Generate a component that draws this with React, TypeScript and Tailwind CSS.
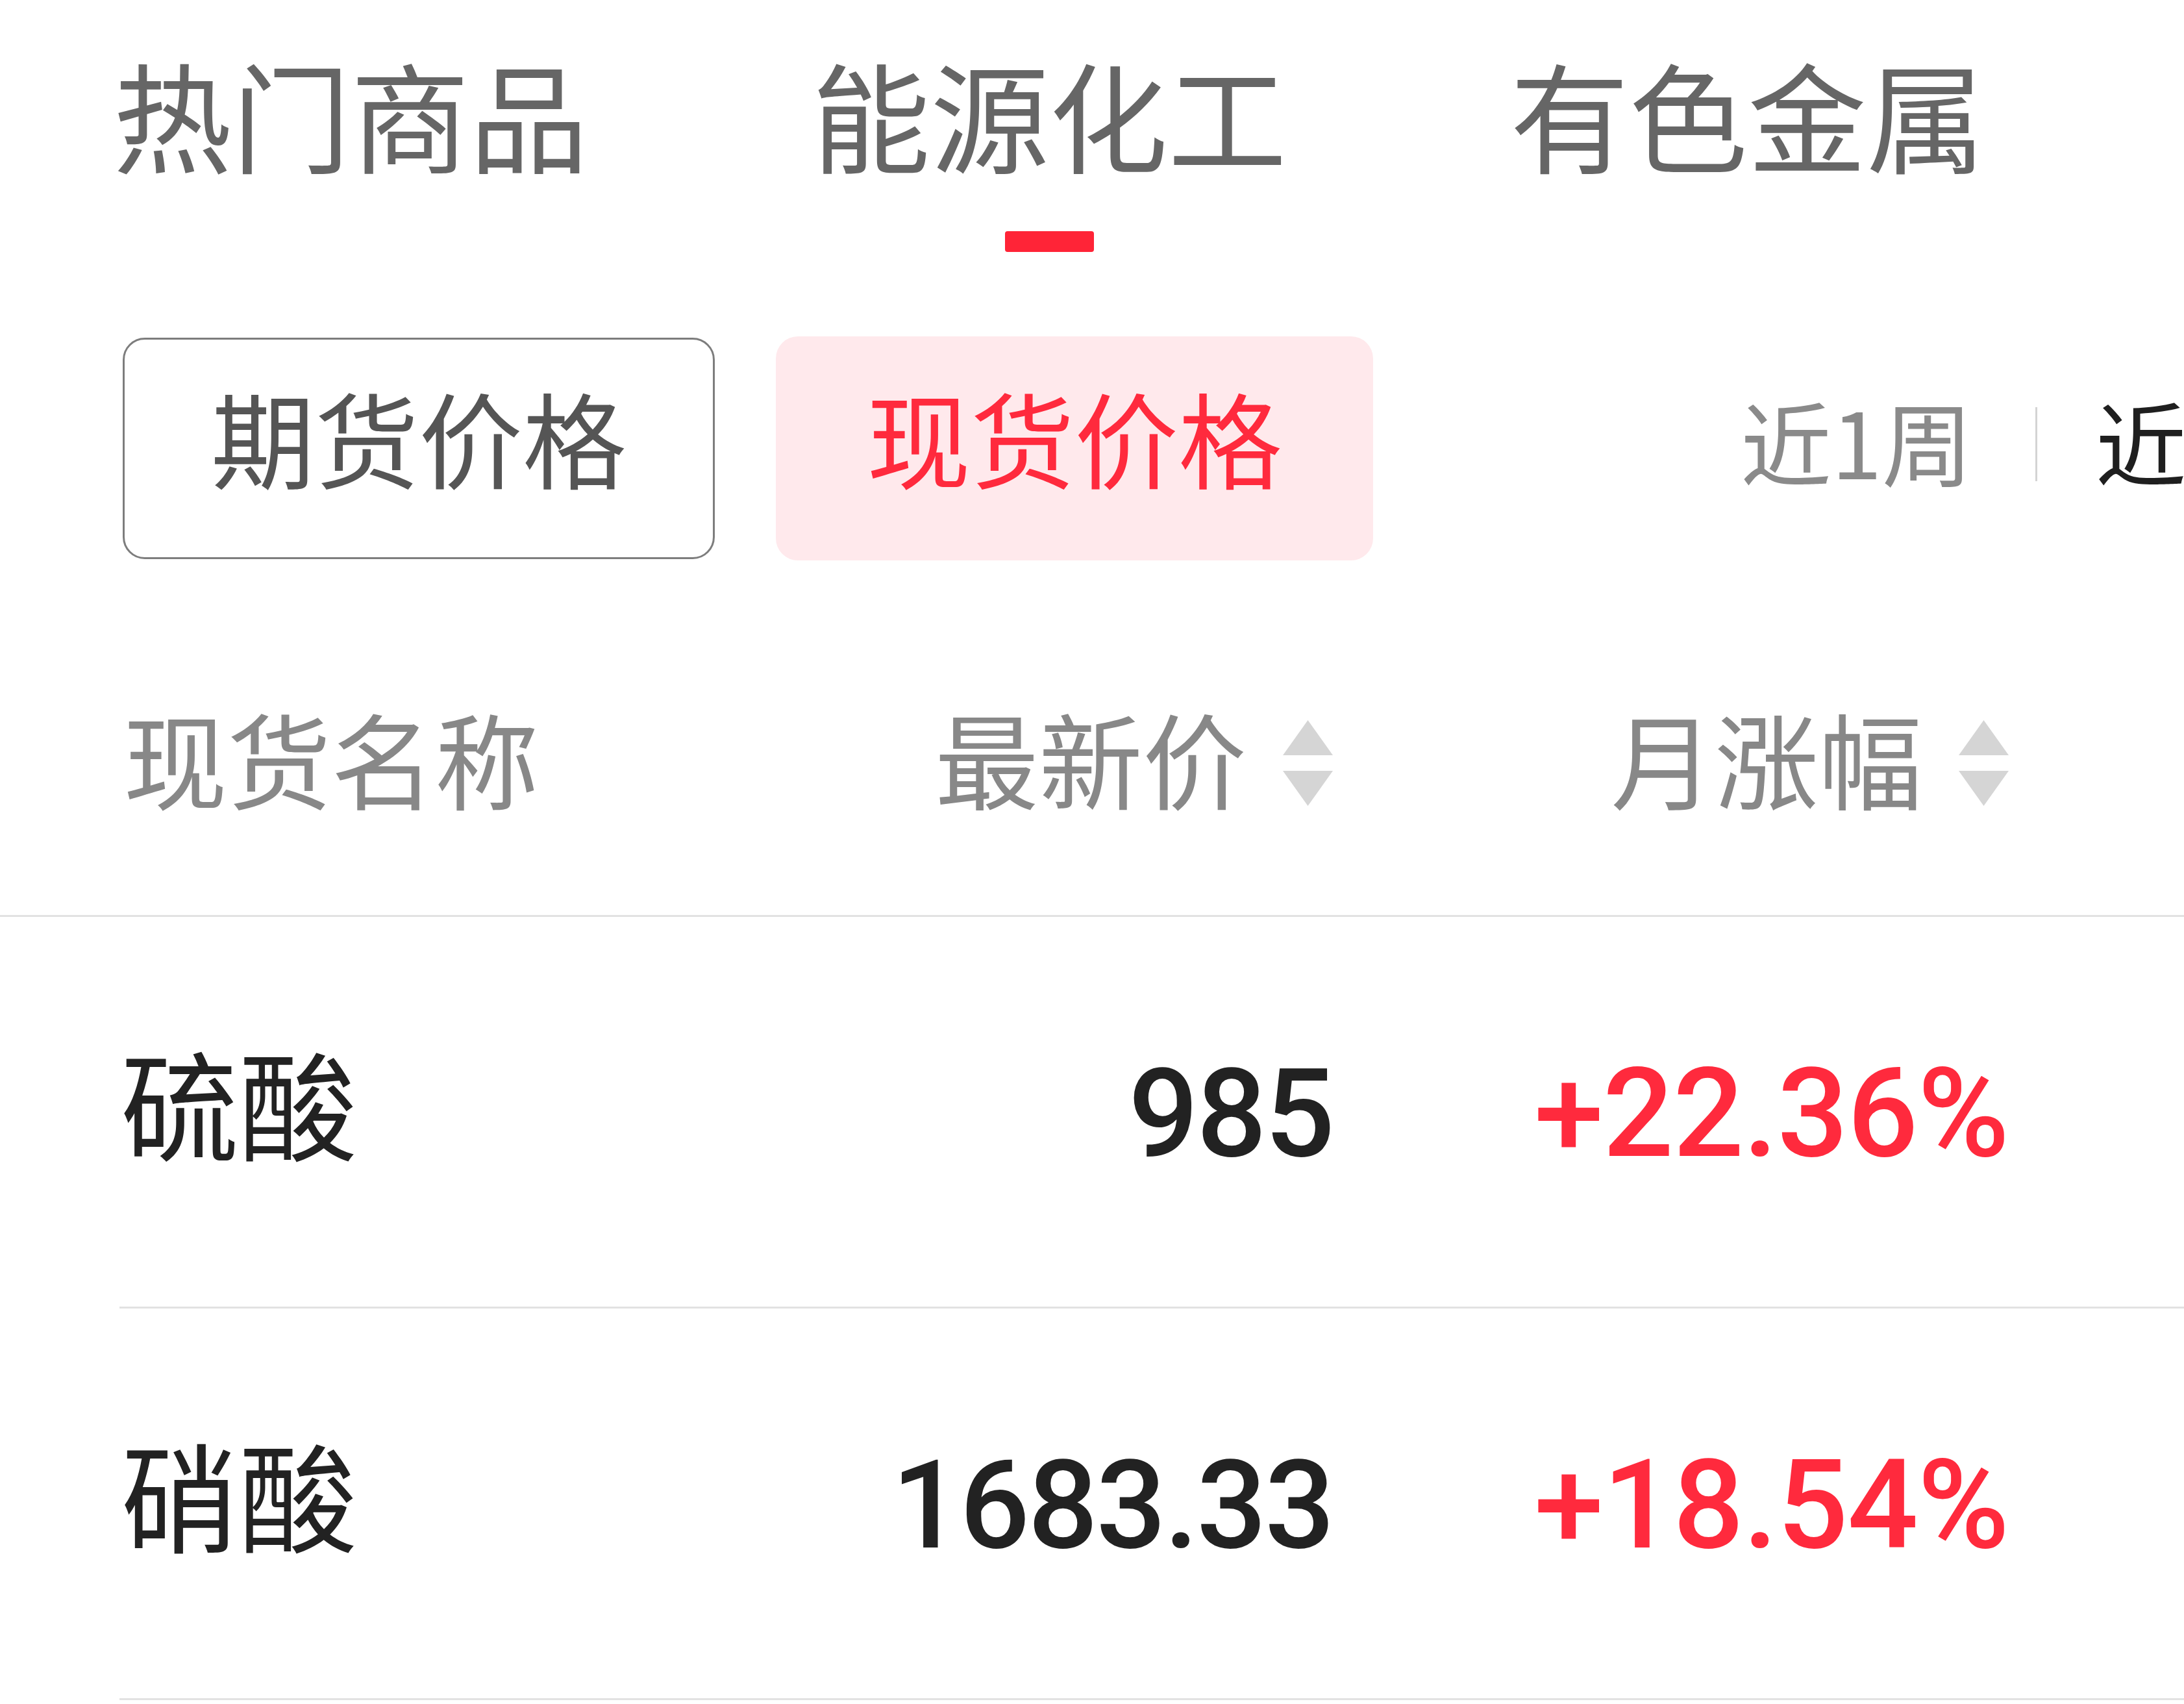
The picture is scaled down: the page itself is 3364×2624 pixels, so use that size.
import { useState } from 'react';

const cjk = '[font-family:"Noto_Sans_CJK_SC","Noto_Sans",sans-serif]';
const num = '[font-family:Roboto,"Noto_Sans",sans-serif]';

const categories = ['热门商品', '能源化工', '有色金属'];

const rows = [
  { name: '硫酸', price: '985', change: '+22.36%' },
  { name: '硝酸', price: '1683.33', change: '+18.54%' },
];

function SortArrows() {
  return (
    <svg width="77" height="132" viewBox="0 0 77 132" className="shrink-0">
      <polygon points="38.5,0 77,54 0,54" fill="#d5d5d5" />
      <polygon points="0,78 77,78 38.5,132" fill="#d5d5d5" />
    </svg>
  );
}

export default function App() {
  const [tab, setTab] = useState(1);
  const [kind, setKind] = useState<'futures' | 'spot'>('spot');

  return (
    <div className={`w-[3364px] h-[2624px] overflow-hidden bg-white ${cjk}`}>
      <nav className="flex gap-[344px] pl-[174px] pt-[82px]">
        {categories.map((c, i) => (
          <button key={c} onClick={() => setTab(i)} className="flex flex-col items-center">
            <span className="text-[183px] leading-none text-[#666666]">{c}</span>
            <span
              className={`mt-[91px] h-[32px] w-[137px] rounded-[4px] ${
                tab === i ? 'bg-[#ff2437]' : 'bg-transparent'
              }`}
            />
          </button>
        ))}
      </nav>

      <div className="mt-[130px] flex items-center pl-[189px]">
        <button
          onClick={() => setKind('futures')}
          className={`flex h-[341px] w-[912px] shrink-0 items-center justify-center rounded-[34px] pb-[40px] text-[160px] leading-none ${
            kind === 'futures'
              ? 'bg-[#ffe9ec] text-[#ff2a3d]'
              : 'border-[3px] border-[#7d7d7d] text-[#555555]'
          }`}
        >
          期货价格
        </button>
        <button
          onClick={() => setKind('spot')}
          className={`ml-[94px] flex h-[345px] w-[920px] shrink-0 items-center justify-center rounded-[34px] pb-[40px] text-[160px] leading-none ${
            kind === 'spot'
              ? 'bg-[#ffe9ec] text-[#ff2a3d]'
              : 'border-[3px] border-[#7d7d7d] text-[#555555]'
          }`}
        >
          现货价格
        </button>
        <div className="ml-[566px] flex shrink-0 items-center whitespace-nowrap pb-[28px] text-[140px] leading-none">
          <span className="text-[#8a8a8a]">近1周</span>
          <span className="ml-[96px] mr-[90px] mt-[14px] h-[114px] w-[3px] bg-[#d4d4d4]" />
          <span className="text-[#1f1f1f]">近1月</span>
        </div>
      </div>

      <div className="mt-[77px] grid h-[472px] grid-cols-[869px_1000px_1041px] items-center border-b-[3px] border-[#e2e2e2] pb-[20px] pl-[184px] text-[160px] leading-none text-[#888888]">
        <span className="pl-[6px]">现货名称</span>
        <span className="flex items-center justify-end gap-[56px]">
          最新价
          <span className="mt-[20px] flex">
            <SortArrows />
          </span>
        </span>
        <span className="flex items-center justify-end gap-[56px]">
          月涨幅
          <span className="mt-[20px] flex">
            <SortArrows />
          </span>
        </span>
      </div>

      <div className="pl-[184px]">
        {rows.map((r) => (
          <div
            key={r.name}
            className="grid h-[603px] grid-cols-[869px_1000px_1041px] items-center border-b-[3px] border-[#e2e2e2] pb-[14px]"
          >
            <span className="mb-[20px] pl-[2px] text-[182px] leading-none text-[#222222]">{r.name}</span>
            <span
              className={`mt-[20px] text-right text-[190px] font-medium leading-none tracking-[-3px] text-[#222222] ${num}`}
            >
              {r.price}
            </span>
            <span
              className={`mt-[20px] text-right text-[192px] font-medium leading-none tracking-[-1px] text-[#ff2a3d] ${num}`}
            >
              {r.change}
            </span>
          </div>
        ))}
      </div>
    </div>
  );
}
